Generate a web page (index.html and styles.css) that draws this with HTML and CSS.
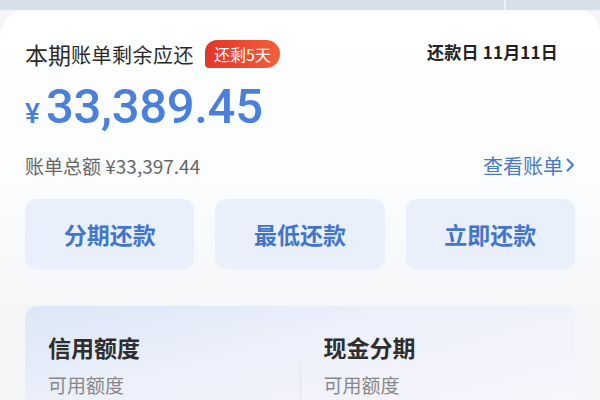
FILE: index.html
```html
<!DOCTYPE html>
<html lang="zh-CN">
<head>
<meta charset="utf-8">
<link rel="stylesheet" href="styles.css">
</head>
<body>
<div class="topbar"><span class="topline"></span></div>
<div class="card">
  <div class="head">
    <div class="title">
      <span class="t-big">本期</span><span class="t-small">账单剩余应还</span>
      <span class="badge">还剩5天</span>
    </div>
    <div class="due">还款日 11月11日</div>
  </div>
  <div class="amount"><span class="yen">¥</span><span class="num">33,389.45</span></div>
  <div class="sub">
    <div class="total">账单总额 ¥33,397.44</div>
    <div class="link">查看账单<svg class="chev" width="10" height="16" viewBox="0 0 10 16"><path d="M2.5 2.5 L8 8 L2.5 13.5" fill="none" stroke="#4a78cc" stroke-width="2" stroke-linecap="round" stroke-linejoin="round"/></svg></div>
  </div>
  <div class="btns">
    <div class="btn">分期还款</div>
    <div class="btn">最低还款</div>
    <div class="btn">立即还款</div>
  </div>
</div>
<div class="lower">
  <div class="panel">
    <div class="col">
      <div class="p-title">信用额度</div>
      <div class="p-sub">可用额度</div>
    </div>
    <div class="col col2">
      <div class="p-title">现金分期</div>
      <div class="p-sub">可用额度</div>
    </div>
  </div>
</div>
</body>
</html>
```
FILE: styles.css
```css
* { box-sizing: border-box; }
html, body { margin: 0; padding: 0; }
body {
  width: 600px;
  height: 400px;
  overflow: hidden;
  background: #f4f5f7;
  font-family: "Noto Sans CJK SC", "Noto Sans", sans-serif;
}
.topbar {
  height: 10px;
  background: #d6dfea;
  position: relative;
}
.topline {
  position: absolute;
  left: 504px;
  top: 0;
  width: 2px;
  height: 10px;
  background: #eef2f7;
}
.card {
  background: linear-gradient(180deg, #ffffff 0%, #fbfcfd 60%, #f5f6f8 100%);
  border-radius: 30px 26px 0 0;
  margin-top: -2px;
  padding: 32px 25px 0 25px;
  height: 298px;
}
.head {
  display: flex;
  justify-content: space-between;
  align-items: center;
  height: 28px;
}
.title {
  display: flex;
  align-items: center;
  color: #2a2a2a;
}
.t-big { font-size: 23px; line-height: 28px; }
.t-small { font-size: 20px; line-height: 28px; margin-top: 2px; letter-spacing: 0.5px; }
.badge {
  margin-left: 11px;
  height: 28px;
  padding: 0 9px;
  border-radius: 12px 14px 14px 4px;
  background: linear-gradient(90deg, #e3352b, #f0603a);
  color: #fff;
  font-size: 16px;
  line-height: 28px;
}
.due {
  font-size: 17px;
  font-weight: 700;
  color: #222;
  margin-right: 17px;
  margin-top: -6px;
  letter-spacing: 0.2px;
}
.amount {
  display: flex;
  align-items: baseline;
  color: #4a80dc;
  margin-top: 14px;
  height: 50px;
}
.yen {
  font-family: "Roboto", sans-serif;
  font-size: 28px;
  font-weight: 500;
  margin-right: 6px;
}
.num {
  font-family: "Roboto", sans-serif;
  font-size: 49px;
  font-weight: 500;
  line-height: 50px;
  letter-spacing: -0.3px;
}
.sub {
  display: flex;
  justify-content: space-between;
  align-items: center;
  margin-top: 20px;
  height: 26px;
}
.total {
  font-size: 19px;
  color: #666;
}
.link {
  font-size: 20px;
  color: #4a78cc;
  display: flex;
  align-items: center;
}
.chev { margin-left: 2px; }
.btns {
  display: grid;
  grid-template-columns: repeat(3, 1fr);
  column-gap: 21px;
  margin-top: 21px;
}
.btn {
  height: 70px;
  border-radius: 11px;
  background: #e9f0fb;
  color: #4376c9;
  font-size: 23px;
  font-weight: 700;
  display: flex;
  align-items: center;
  justify-content: center;
}
.lower {
  padding: 0 25px;
  background: #f5f6f8;
}
.panel {
  height: 100px;
  border-radius: 13px 4px 0 0;
  background: linear-gradient(165deg, #dbe6f7 0%, #ebf0fa 40%, #f2f2fb 70%, #f6f6fb 100%);
  display: flex;
  padding-top: 26px;
}
.col {
  flex: 1;
  padding-left: 23px;
}
.col2 {
  border-left: 1px solid #e4e6ec;
  margin-top: 30px;
  position: relative;
}
.col2 .p-title { margin-top: -30px; }
.p-title {
  font-size: 23px;
  font-weight: 700;
  color: #2e2e2e;
  line-height: 30px;
}
.p-sub {
  font-size: 19px;
  color: #888;
  margin-top: 10px;
  line-height: 26px;
}
```
